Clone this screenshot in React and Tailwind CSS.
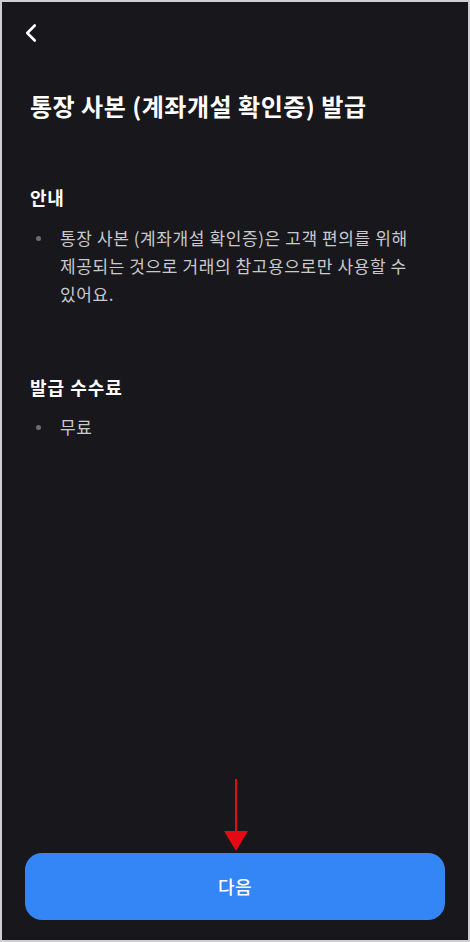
import { ChevronLeft } from 'lucide-react'

const font = { fontFamily: '"Noto Sans CJK KR", "Noto Sans", sans-serif' }

function Bullet({ children }) {
  return (
    <li className="flex">
      <span className="w-[30px] shrink-0 pl-[6px] pt-[12px]">
        <span className="block w-[5px] h-[5px] rounded-full bg-[#6b6b73]" />
      </span>
      <p className="text-[17px] leading-[28px] tracking-[0.6px] text-[#c9c9ce]">{children}</p>
    </li>
  )
}

export default function App() {
  return (
    <div
      className="relative w-[470px] h-[942px] bg-[#18181c] border-2 border-[#cfcfd2] flex flex-col overflow-hidden"
      style={font}
    >
      {/* HEADER */}
      <div className="h-[60px] pl-[14px] pt-[16px]">
        <ChevronLeft className="w-[30px] h-[30px] text-white" strokeWidth={2.1} />
      </div>

      <h1 className="px-[28px] mt-[28px] text-[24px] leading-[32px] font-bold text-white tracking-[0.5px]">
        통장 사본 (계좌개설 확인증) 발급
      </h1>

      {/* 안내 */}
      <section className="px-[28px] mt-[62px]">
        <h2 className="text-[18px] leading-[26px] font-bold text-white tracking-[0.6px]">안내</h2>
        <ul className="mt-[14px]">
          <Bullet>
            통장 사본 (계좌개설 확인증)은 고객 편의를 위해
            <br />
            제공되는 것으로 거래의 참고용으로만 사용할 수
            <br />
            있어요.
          </Bullet>
        </ul>
      </section>

      {/* 수수료 */}
      <section className="px-[28px] mt-[66px]">
        <h2 className="text-[18px] leading-[26px] font-bold text-white tracking-[1px]">발급 수수료</h2>
        <ul className="mt-[13px]">
          <Bullet>무료</Bullet>
        </ul>
      </section>

      <div className="flex-1" />

      {/* BUTTON */}
      <div className="px-[23px] pb-[20px]">
        <button className="w-full h-[67px] rounded-[17px] bg-[#3485f5] text-white text-[18px] font-medium tracking-[0.5px]">
          다음
        </button>
      </div>

      {/* annotation arrow */}
      <svg
        className="absolute left-[220px] top-[775px]"
        width="28"
        height="76"
        viewBox="0 0 28 76"
      >
        <line x1="14" y1="2" x2="14" y2="58" stroke="#e50914" strokeWidth="2" />
        <polygon points="2,54 26,54 14,74" fill="#e50914" />
      </svg>
    </div>
  )
}
